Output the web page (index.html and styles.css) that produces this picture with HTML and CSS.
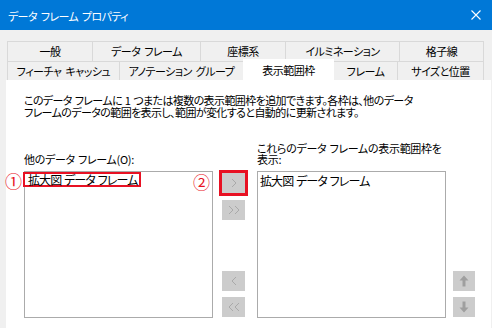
FILE: index.html
```html
<!DOCTYPE html>
<html lang="ja">
<head>
    <meta charset="UTF-8">
    <title>データ フレーム プロパティ</title>
    <link rel="stylesheet" href="styles.css">
</head>
<body>
    <div class="window">
        <div class="titlebar">
            <span class="title">データ フレーム プロパティ</span>
            <svg class="close" width="10" height="10" viewBox="0 0 10 10">
                <path d="M0.5 0.5 L9.5 9.5 M9.5 0.5 L0.5 9.5" stroke="#fff" stroke-width="1.1" fill="none"/>
            </svg>
        </div>

        <div class="tabs">
            <div class="tab-row">
                <div class="tab" style="width:86px">一般</div>
                <div class="tab" style="width:109px">データ フレーム</div>
                <div class="tab" style="width:86px">座標系</div>
                <div class="tab" style="width:115px">イルミネーション</div>
                <div class="tab" style="width:85px">格子線</div>
            </div>
            <div class="tab-row second">
                <div class="tab" style="width:113px">フィーチャ キャッシュ</div>
                <div class="tab" style="width:125px">アノテーション グループ</div>
                <div class="tab active" style="width:91px">表示範囲枠</div>
                <div class="tab" style="width:65px">フレーム</div>
                <div class="tab" style="width:87px">サイズと位置</div>
            </div>
        </div>

        <div class="panel">
            <p class="desc">このデータ フレームに 1 つまたは複数の表示範囲枠を追加できます。各枠は、他のデータ<br>フレームのデータの範囲を表示し、範囲が変化すると自動的に更新されます。</p>

            <div class="lists">
                <div class="label">他のデータ フレーム(O):</div>
                <div></div>
                <div class="label">これらのデータ フレームの表示範囲枠を<br>表示:</div>
                <div></div>

                <div class="listbox">
                    <span class="mark one">①</span>
                    <div class="item marked">拡大図 データ フレーム</div>
                </div>
                <div class="move-buttons">
                    <div class="marked-btn">
                        <span class="mark two">②</span>
                        <div class="btn">
                            <svg width="8" height="10" viewBox="0 0 8 10"><path d="M2 1 L6 5 L2 9" stroke="#a9a9a9" fill="none"/></svg>
                        </div>
                    </div>
                    <div class="btn">
                        <svg width="14" height="10" viewBox="0 0 14 10"><path d="M2 1 L6 5 L2 9 M8 1 L12 5 L8 9" stroke="#a9a9a9" fill="none"/></svg>
                    </div>
                    <div class="btn push">
                        <svg width="8" height="10" viewBox="0 0 8 10"><path d="M6 1 L2 5 L6 9" stroke="#a9a9a9" fill="none"/></svg>
                    </div>
                    <div class="btn">
                        <svg width="14" height="10" viewBox="0 0 14 10"><path d="M6 1 L2 5 L6 9 M12 1 L8 5 L12 9" stroke="#a9a9a9" fill="none"/></svg>
                    </div>
                </div>
                <div class="listbox">
                    <div class="item">拡大図 データ フレーム</div>
                </div>
                <div class="order-buttons">
                    <div class="btn small">
                        <svg width="10" height="12" viewBox="0 0 10 12"><path d="M5 0.5 L9.5 5.5 L6.5 5.5 L6.5 11.5 L3.5 11.5 L3.5 5.5 L0.5 5.5 Z" fill="#9f9f9f"/></svg>
                    </div>
                    <div class="btn small">
                        <svg width="10" height="12" viewBox="0 0 10 12"><path d="M5 11.5 L9.5 6.5 L6.5 6.5 L6.5 0.5 L3.5 0.5 L3.5 6.5 L0.5 6.5 Z" fill="#9f9f9f"/></svg>
                    </div>
                </div>
            </div>

            <div class="bottom-label">枠線(B):</div>
        </div>
    </div>
</body>
</html>
```

FILE: styles.css
```css
body {
    margin: 0;
    font-family: "Noto Sans CJK JP", "Noto Sans", sans-serif;
    font-size: 11px;
    font-feature-settings: "palt";
    color: #000;
}
.window {
    width: 492px;
    height: 328px;
    overflow: hidden;
    background-color: #f0f0f0;
}
.titlebar {
    height: 30px;
    background-color: #0078d7;
    color: #fff;
    display: flex;
    align-items: center;
    padding: 0 10px 0 8px;
}
.title {
    flex: 1;
    line-height: 14px;
    padding-top: 1px;
    letter-spacing: -0.6px;
    word-spacing: 2px;
}
.close {
    margin-right: 1px;
}

/* タブ */
.tabs {
    padding: 11px 0 0 7px;
}
.tab-row {
    display: flex;
    height: 20px;
}
.tab-row.second {
    height: 19px;
}
.tab {
    box-sizing: border-box;
    margin-right: -1px;
    border: 1px solid #d9d9d9;
    border-bottom: none;
    background-color: #f0f0f0;
    text-align: center;
    line-height: 18px;
    white-space: nowrap;
    letter-spacing: -0.5px;
    word-spacing: 2px;
}
.tab.active {
    background-color: #fff;
    border-color: #fff;
    margin-top: -2px;
    height: 21px;
    line-height: 20px;
    position: relative;
    z-index: 1;
}

/* パネル */
.panel {
    background-color: #fff;
    margin: 0 1px 0 6px;
    height: 250px;
    padding: 14px 0 0 18px;
    box-sizing: border-box;
}
.desc {
    margin: 0;
    line-height: 12px;
    white-space: nowrap;
    letter-spacing: -0.6px;
    word-spacing: 1px;
}
.lists {
    display: grid;
    grid-template-columns: 189px 44px 189px 29px;
    grid-template-rows: 22px 147px;
    row-gap: 6px;
    margin-top: 25px;
}
.label {
    align-self: end;
    line-height: 11px;
    white-space: nowrap;
    letter-spacing: -0.3px;
    word-spacing: 1px;
}
.listbox {
    position: relative;
    border: 1px solid #ababab;
    box-sizing: border-box;
}
.item {
    line-height: 11px;
    padding: 3px 0 0 2px;
    white-space: nowrap;
    font-size: 12px;
    letter-spacing: -0.9px;
    word-spacing: 1px;
}
.item.marked {
    display: inline-block;
    margin: -1px 0 0 -2px;
    padding: 0 2px 0 3px;
    border: 2px solid #e81123;
    line-height: 11px;
}
.mark {
    position: absolute;
    color: #e81123;
    font-size: 17px;
    line-height: 16px;
    letter-spacing: 0;
}
.mark.one {
    left: -20px;
    top: 1px;
}
.mark.two {
    left: -26px;
    top: 4px;
}

/* ボタン */
.move-buttons {
    display: flex;
    flex-direction: column;
    padding: 0 0 1px 9px;
    gap: 6px;
}
.marked-btn {
    position: relative;
    width: 23px;
    margin: -1px 0 -2px -3px;
    padding: 3px;
    outline: 3px solid #e81123;
    outline-offset: -3px;
}
.btn {
    width: 23px;
    height: 20px;
    background-color: #cccccc;
    display: flex;
    align-items: center;
    justify-content: center;
}
.btn.push {
    margin-top: auto;
}
.order-buttons {
    display: flex;
    flex-direction: column;
    justify-content: flex-end;
    gap: 6px;
    padding: 0 0 1px 7px;
}
.btn.small {
    width: 22px;
}
.bottom-label {
    margin: 9px 0 0 9px;
    line-height: 12px;
}
```
